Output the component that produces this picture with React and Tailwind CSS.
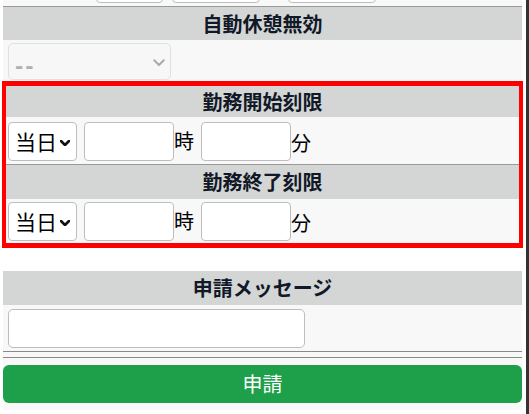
import React from "react";

const Chevron = ({ color = "#111", w = 10, sw = 2.6 }) => (
  <svg width={w} height={w * 0.6} viewBox="0 0 10 6" fill="none">
    <polyline points="1,1 5,5 9,1" stroke={color} strokeWidth={sw} strokeLinecap="round" strokeLinejoin="round" />
  </svg>
);

const Header = ({ children, h }) => (
  <div className={`flex items-center justify-center bg-[#d4d6d5] font-bold text-[20px] text-[#111827] ${h}`}>
    {children}
  </div>
);

const TimeRow = ({ h, pt }) => (
  <div className={`flex items-start bg-[#f8f8f8] pl-[2px] ${h} ${pt}`}>
    <div className="flex h-[39px] w-[69px] shrink-0 items-center whitespace-nowrap rounded-[4px] border border-[#bdbdbd] bg-white pl-[6px]">
      <span className="text-[21px] leading-none text-black">当日</span>
      <span className="ml-[3px] mt-[2px] flex"><Chevron /></span>
    </div>
    <div className="ml-[7px] h-[39px] w-[90px] shrink-0 rounded-[4px] border border-[#bdbdbd] bg-white" />
    <span className="mt-[9px] w-[27px] shrink-0 text-[20px] leading-none text-black">時</span>
    <div className="h-[39px] w-[90px] shrink-0 rounded-[4px] border border-[#bdbdbd] bg-white" />
    <span className="mt-[11px] text-[20px] leading-none text-black">分</span>
  </div>
);

export default function App() {
  return (
    <div className="flex h-[414px] w-[529px] overflow-hidden bg-white font-['Noto_Sans_CJK_JP','Noto_Sans',sans-serif]">
      <div className="flex w-[526px] flex-col pl-[3px] pr-[4px]">
        {/* partial top row */}
        <div className="flex h-[6px] items-end overflow-hidden bg-[#f8f8f8]">
          <div className="mb-[3px] ml-[93px] h-[30px] w-[67px] rounded-[4px] border border-[#bdbdbd] bg-white" />
          <div className="mb-[3px] ml-[9px] h-[30px] w-[88px] rounded-[4px] border border-[#bdbdbd] bg-white" />
          <div className="mb-[3px] ml-[28px] h-[30px] w-[88px] rounded-[4px] border border-[#bdbdbd] bg-white" />
        </div>
        <div className="h-px bg-[#999]" />
        <Header h="h-[33px]">自動休憩無効</Header>
        <div className="flex h-[41px] items-start bg-[#f8f8f8] pl-[5px] pt-[3px]">
          <div className="flex h-[37px] w-[163px] items-center justify-between rounded-[5px] border border-[#e0e0e0] bg-[#f7f7f7] pl-[6px] pr-[5px]">
            <span className="mt-[8px] font-['DejaVu_Sans',sans-serif] text-[20px] font-bold leading-none tracking-[2px] text-[#b0b0b0]">--</span>
            <span className="mt-[2px] flex"><Chevron color="#aaa" w={12} sw={1.6} /></span>
          </div>
        </div>
        {/* highlighted box */}
        <div className="-mx-px flex flex-col border-x-4 border-y-[5px] border-[#ff0000]">
          <Header h="h-[31px]">勤務開始刻限</Header>
          <TimeRow h="h-[47px]" pt="pt-[5px]" />
          <div className="h-px bg-[#999]" />
          <Header h="h-[34px]">勤務終了刻限</Header>
          <TimeRow h="h-[44px]" pt="pt-[3px]" />
        </div>
        <div className="h-[23px]" />
        <Header h="h-[34px]">申請メッセージ</Header>
        <div className="flex h-[46px] items-start bg-[#f8f8f8] pl-[5px] pt-[4px]">
          <div className="h-[39px] w-[297px] rounded-[5px] border border-[#bdbdbd] bg-white" />
        </div>
        <div className="h-px bg-[#8a8a8a]" />
        <div className="h-[5px] bg-[#f8f8f8]" />
        <div className="h-px bg-[#8a8a8a]" />
        <div className="flex h-[52px] flex-col bg-[#f8f8f8] pt-[7px]">
          <button className="flex h-[38px] w-full items-center justify-center rounded-[6px] bg-[#1e9f4a] text-[20px] text-white">
            申請
          </button>
        </div>
      </div>
      <div className="w-[3px] bg-[#333]" />
    </div>
  );
}
